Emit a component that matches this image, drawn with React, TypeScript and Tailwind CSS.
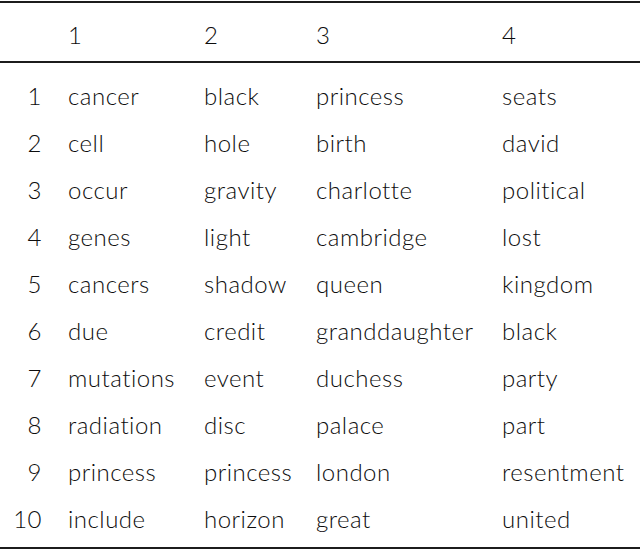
import React from 'react';

const HEADERS = ['1', '2', '3', '4'];

const ROWS: string[][] = [
  ['cancer', 'black', 'princess', 'seats'],
  ['cell', 'hole', 'birth', 'david'],
  ['occur', 'gravity', 'charlotte', 'political'],
  ['genes', 'light', 'cambridge', 'lost'],
  ['cancers', 'shadow', 'queen', 'kingdom'],
  ['due', 'credit', 'granddaughter', 'black'],
  ['mutations', 'event', 'duchess', 'party'],
  ['radiation', 'disc', 'palace', 'part'],
  ['princess', 'princess', 'london', 'resentment'],
  ['include', 'horizon', 'great', 'united'],
];

const GRID = 'grid grid-cols-[42px_26px_136px_112px_186px_1fr] items-center';

function Row({ label, cells, className }: { label: string; cells: string[]; className: string }) {
  return (
    <div className={`${GRID} ${className}`}>
      <span className="text-right">{label}</span>
      <span />
      {cells.map((c, i) => (
        <span key={i} className="whitespace-nowrap">
          {c}
        </span>
      ))}
    </div>
  );
}

export default function App() {
  return (
    <div className="w-[640px] h-[551px] bg-white pt-px font-['Lato','Liberation_Sans',sans-serif] font-light text-[24px] tracking-[0.5px] text-[#0d0d0d] leading-none">
      <div className="border-t-2 border-[#1c1c1c]" />
      <Row label="" cells={HEADERS} className="h-[58px] pt-[5px]" />
      <div className="border-t-2 border-[#1c1c1c]" />
      <div className="pt-[9px] pb-[4px]">
        {ROWS.map((r, i) => (
          <Row key={i} label={String(i + 1)} cells={r} className="h-[47.1px]" />
        ))}
      </div>
      <div className="border-t-2 border-[#1c1c1c]" />
    </div>
  );
}
